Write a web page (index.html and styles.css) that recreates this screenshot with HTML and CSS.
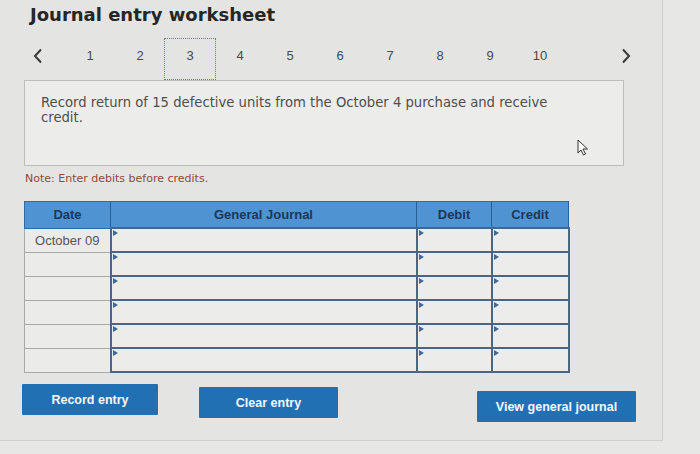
FILE: index.html
```html
<!DOCTYPE html>
<html>
<head>
<meta charset="utf-8">
<link rel="stylesheet" href="styles.css">
</head>
<body>
<div class="panel">
  <h1 class="title">Journal entry worksheet</h1>
  <div class="nav">
    <span class="chev chev-left"><svg width="10" height="16" viewBox="0 0 10 16"><path d="M8 1.5 L2 8 L8 14.5" fill="none" stroke="#3a3a3a" stroke-width="2"/></svg></span>
    <div class="steps">
      <span class="step">1</span>
      <span class="step">2</span>
      <span class="step current">3</span>
      <span class="step">4</span>
      <span class="step">5</span>
      <span class="step">6</span>
      <span class="step">7</span>
      <span class="step">8</span>
      <span class="step">9</span>
      <span class="step">10</span>
    </div>
    <span class="chev chev-right"><svg width="10" height="16" viewBox="0 0 10 16"><path d="M2 1.5 L8 8 L2 14.5" fill="none" stroke="#3a3a3a" stroke-width="2"/></svg></span>
  </div>
  <div class="prompt">
    <p>Record return of 15 defective units from the October 4 purchase and receive credit.</p>
    <svg class="cursor" width="12" height="17" viewBox="0 0 12 17"><path d="M1 1 L1 14 L4 11 L6.5 16 L8.5 15 L6 10 L10.5 10 Z" fill="#fafafa" stroke="#333" stroke-width="1"/></svg>
  </div>
  <div class="note">Note: Enter debits before credits.</div>
  <table class="journal">
    <colgroup>
      <col class="c-date"><col class="c-gj"><col class="c-debit"><col class="c-credit">
    </colgroup>
    <thead>
      <tr><th>Date</th><th>General Journal</th><th>Debit</th><th>Credit</th></tr>
    </thead>
    <tbody>
      <tr><td class="date">October 09</td><td class="inp"><i></i></td><td class="inp"><i></i></td><td class="inp"><i></i></td></tr>
      <tr><td class="date"></td><td class="inp"><i></i></td><td class="inp"><i></i></td><td class="inp"><i></i></td></tr>
      <tr><td class="date"></td><td class="inp"><i></i></td><td class="inp"><i></i></td><td class="inp"><i></i></td></tr>
      <tr><td class="date"></td><td class="inp"><i></i></td><td class="inp"><i></i></td><td class="inp"><i></i></td></tr>
      <tr><td class="date"></td><td class="inp"><i></i></td><td class="inp"><i></i></td><td class="inp"><i></i></td></tr>
      <tr><td class="date"></td><td class="inp"><i></i></td><td class="inp"><i></i></td><td class="inp"><i></i></td></tr>
    </tbody>
  </table>
  <div class="actions">
    <button class="btn btn-record">Record entry</button>
    <button class="btn btn-clear">Clear entry</button>
    <button class="btn btn-view">View general journal</button>
  </div>
</div>
</body>
</html>
```
FILE: styles.css
```css
html, body {
  margin: 0;
  padding: 0;
  background: #e7e7e5;
}
body {
  width: 700px;
  height: 454px;
  overflow: hidden;
  font-family: "DejaVu Sans", Verdana, sans-serif;
}
.panel {
  width: 662px;
  height: 440px;
  border-right: 1px solid #cfcfcd;
  border-bottom: 1px solid #cfcfcd;
  background: #e4e4e2;
  position: relative;
}
.title {
  margin: 0;
  padding: 4px 0 0 30px;
  font-size: 18px;
  font-weight: bold;
  color: #262626;
  line-height: 22px;
}
.nav {
  display: flex;
  align-items: center;
  height: 42px;
  margin-top: 12px;
}
.chev {
  display: flex;
  align-items: center;
  padding-bottom: 7px;
}
.chev-left {
  margin-left: 33px;
  width: 32px;
}
.chev-right {
  margin-left: 56px;
}
.steps {
  display: flex;
}
.step {
  width: 50px;
  height: 42px;
  box-sizing: border-box;
  display: flex;
  align-items: center;
  justify-content: center;
  padding-bottom: 8px;
  font-family: "Liberation Sans", Arial, sans-serif;
  font-size: 13px;
  color: #4a4a4a;
}
.step.current {
  border: 1px dotted #5a7ea8;
  width: 52px;
  margin: 0 -1px;
}
.prompt {
  margin-left: 24px;
  width: 600px;
  height: 86px;
  box-sizing: border-box;
  border: 1px solid #bdbdbb;
  background: #ececeb;
  padding: 14px 16px 0 16px;
  position: relative;
}
.prompt p {
  margin: 0;
  font-size: 13.2px;
  line-height: 15px;
  color: #4e4e4e;
  width: 512px;
}
.cursor {
  position: absolute;
  left: 552px;
  top: 58px;
}
.note {
  margin: 6px 0 0 25px;
  font-size: 11px;
  color: #8e4a3c;
  line-height: 14px;
}
.journal {
  margin: 15px 0 0 24px;
  border-collapse: collapse;
  table-layout: fixed;
  width: 544px;
}
.c-date { width: 86px; }
.c-gj { width: 306px; }
.c-debit { width: 75px; }
.c-credit { width: 77px; }
.journal th {
  height: 25px;
  padding: 0;
  background: #4f93d3;
  color: #1d3756;
  font-family: "Liberation Sans", Arial, sans-serif;
  font-size: 13px;
  font-weight: bold;
  border: 1px solid #2f6aa4;
  border-right: 1px solid #2a5f96;
}
.journal td {
  height: 22px;
  padding: 0;
}
.journal td.date {
  background: #ebebea;
  border: 1px solid #a9a9a9;
  font-family: "Liberation Sans", Arial, sans-serif;
  font-size: 13px;
  color: #555;
  text-align: center;
}
.journal td.inp {
  background: #ececeb;
  border: 2px solid #4d6584;
  position: relative;
}
.journal td.inp i {
  position: absolute;
  left: 1px;
  top: 1px;
  width: 0;
  height: 0;
  border-top: 3px solid transparent;
  border-bottom: 3px solid transparent;
  border-left: 5px solid #3a6a9c;
}
.actions {
  display: flex;
  align-items: flex-start;
  margin: 11px 0 0 22px;
}
.btn {
  border: none;
  background: #2270b4;
  color: #f4f7fb;
  font-family: "Liberation Sans", Arial, sans-serif;
  font-weight: bold;
  font-size: 12.5px;
  height: 31px;
  padding: 0;
  border-radius: 1px;
}
.btn-record {
  width: 136px;
}
.btn-clear {
  width: 139px;
  margin-left: 41px;
  margin-top: 3px;
}
.btn-view {
  width: 159px;
  margin-left: 139px;
  margin-top: 7px;
}
```
